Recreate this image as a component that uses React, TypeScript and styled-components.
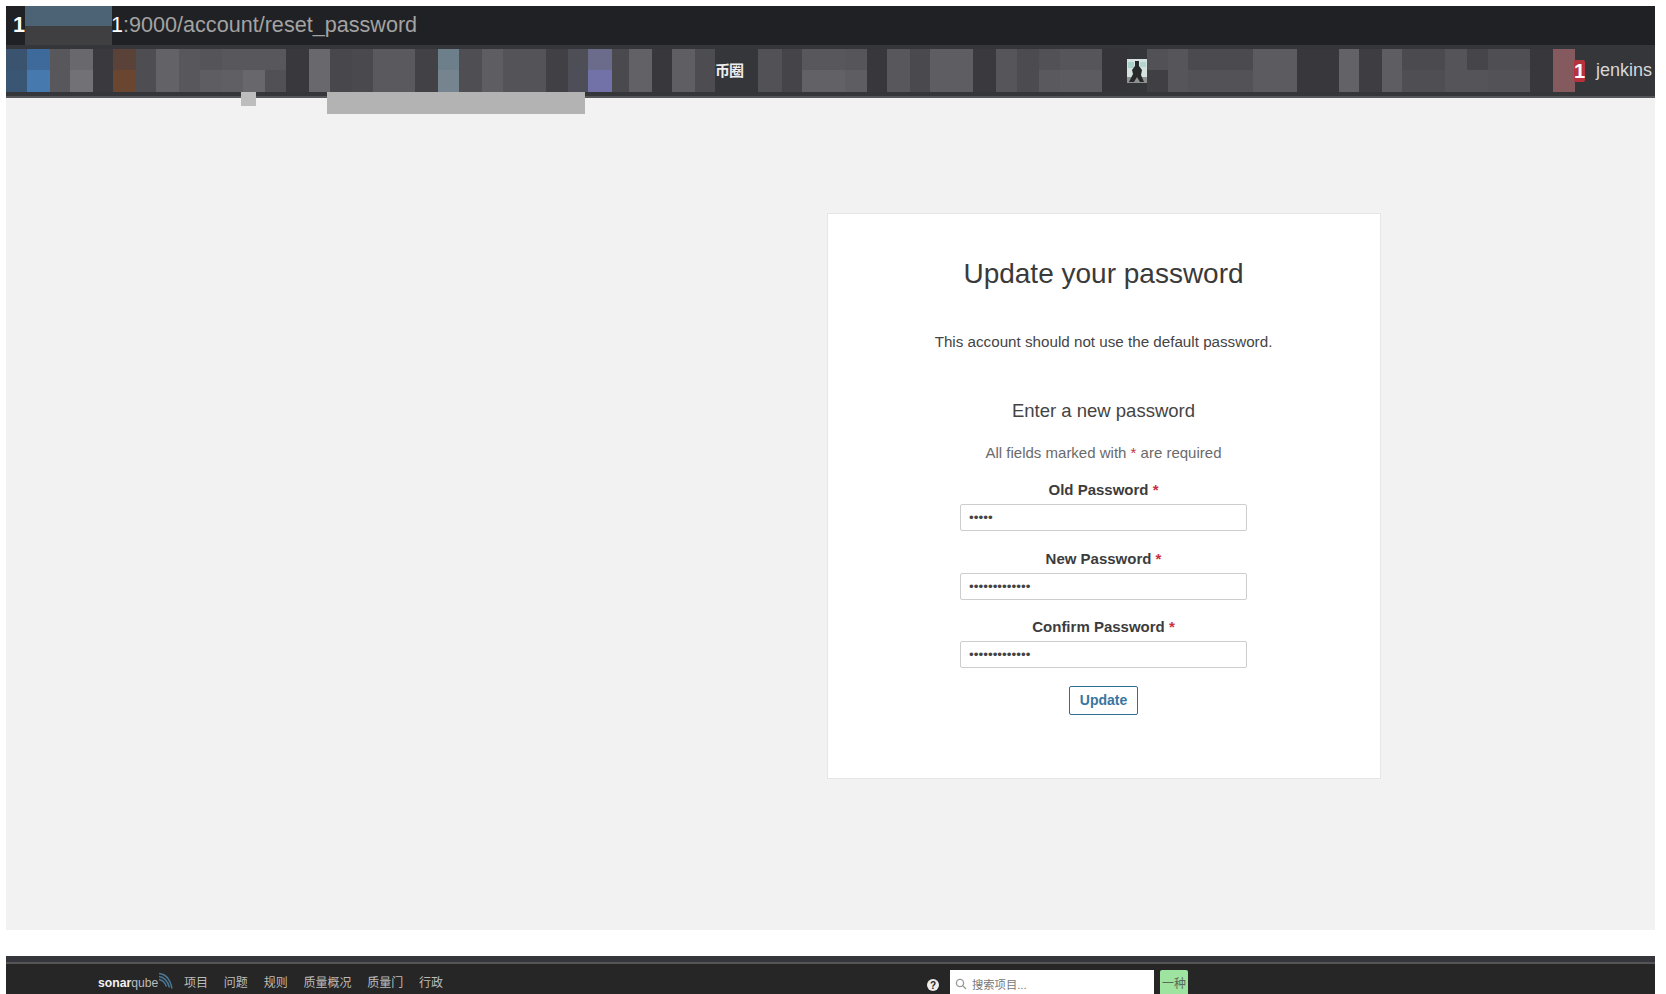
import styled, { createGlobalStyle } from "styled-components";

const GlobalStyle = createGlobalStyle`
  html, body {
    margin: 0;
    padding: 0;
    background: #fff;
    height: 994px;
    overflow: hidden;
  }
`;

const Page = styled.div`
  height: 994px;
  padding: 6px 11px 0 6px;
  box-sizing: border-box;
  display: flex;
  flex-direction: column;
  font-family: "Liberation Sans", "Noto Sans CJK SC", sans-serif;
  overflow: hidden;
`;

const UrlBar = styled.div`
  height: 39px;
  flex: none;
  background: #202124;
  display: flex;
  align-items: center;
  padding: 0 0 2px 7px;
  box-sizing: border-box;
  font-size: 21.6px;
  color: #a3a3a3;
  position: relative;
`;
const UrlStart = styled.span`
  color: #fff;
  font-weight: bold;
  width: 98px;
`;
const UrlOne = styled.span`
  color: #fff;
`;
const UrlMask = styled.div`
  position: absolute;
  left: 19px;
  top: 0;
  width: 87px;
  height: 39px;
  background: linear-gradient(#4c6275 0 20px, #3f3f41 20px);
`;

const NavBar = styled.div`
  height: 53px;
  flex: none;
  background: #35363a;
  border-bottom: 2px solid #55565a;
  box-sizing: border-box;
  padding-top: 4px;
  display: flex;
  position: relative;
`;
const Cell = styled.div<{ $w: number; $top: string; $bottom: string }>`
  width: ${(p) => p.$w}px;
  height: 43px;
  flex: none;
  background: linear-gradient(${(p) => p.$top} 0 21px, ${(p) => p.$bottom} 21px);
`;
const Coin = styled.div`
  width: 43px;
  height: 41px;
  flex: none;
  display: flex;
  align-items: center;
  font-size: 15px;
  font-weight: bold;
  color: #eee;
  letter-spacing: -1px;
`;
const Avatar = styled.div`
  width: 20px;
  height: 43px;
  flex: none;
  display: flex;
  align-items: center;
`;
const Badge = styled.div`
  width: 11px;
  height: 22px;
  margin: 11px 0 0 -1px;
  flex: none;
  background: #b8323e;
  border-radius: 2px;
  color: #fff;
  font-weight: bold;
  font-size: 20px;
  display: flex;
  align-items: center;
  justify-content: center;
`;
const UserName = styled.div`
  margin-left: 11px;
  height: 43px;
  line-height: 43px;
  font-size: 18px;
  color: #d8d8d8;
  white-space: nowrap;
`;
const DropBar = styled.div`
  position: absolute;
  left: 321px;
  top: 47px;
  width: 258px;
  height: 22px;
  background: #b3b3b3;
`;
const DropDot = styled.div`
  position: absolute;
  left: 235px;
  top: 47px;
  width: 15px;
  height: 14px;
  background: #bdbdbd;
`;

const Main = styled.main`
  height: 832px;
  flex: none;
  background: #f2f2f2;
  box-sizing: border-box;
  padding: 115px 274px 0 0;
  display: flex;
  justify-content: flex-end;
  align-items: flex-start;
`;
const Card = styled.form`
  width: 554px;
  height: 566px;
  box-sizing: border-box;
  background: #fff;
  border: 1px solid #e6e6e6;
  display: flex;
  flex-direction: column;
  align-items: center;
  padding: 43px 1px 0 0;
`;
const Title = styled.h1`
  margin: 0;
  font-size: 28px;
  line-height: 34px;
  font-weight: normal;
  color: #3a3a3a;
`;
const Note = styled.p`
  margin: 41px 0 0;
  font-size: 15.2px;
  line-height: 20px;
  color: #444;
`;
const SubTitle = styled.h2`
  margin: 48px 0 0;
  font-size: 18.5px;
  line-height: 22px;
  font-weight: normal;
  color: #444;
`;
const Hint = styled.p`
  margin: 21px 0 17px;
  font-size: 15px;
  line-height: 20px;
  color: #6a6a6a;
`;
const Star = styled.span`
  color: #c8323f;
`;
const Field = styled.div`
  display: flex;
  flex-direction: column;
  align-items: center;
  height: 68.5px;
`;
const FieldLabel = styled.label`
  font-size: 15px;
  line-height: 20px;
  font-weight: bold;
  color: #3c3c3c;
`;
const PasswordInput = styled.input`
  width: 287px;
  height: 27px;
  margin-top: 4px;
  box-sizing: border-box;
  border: 1px solid #cdcdcd;
  border-radius: 2px;
  padding: 0 8px;
  font-family: "Liberation Sans", sans-serif;
  font-size: 13.5px;
  color: #444;
  background: #fff;
  outline: none;
`;
const UpdateButton = styled.button`
  width: 69px;
  height: 29px;
  box-sizing: border-box;
  background: #fff;
  border: 1px solid #2f6f93;
  border-radius: 2px;
  color: #3a75a0;
  font-family: "Liberation Sans", sans-serif;
  font-size: 14px;
  font-weight: bold;
  padding: 0;
`;

const Gap = styled.div`
  height: 26px;
  flex: none;
  background: #fff;
`;

const SonarBar = styled.div`
  flex: 1;
  background: #262626;
  display: flex;
  flex-direction: column;
`;
const SonarTop = styled.div`
  height: 6px;
  flex: none;
  background: #35353c;
  border-bottom: 2px solid #555;
`;
const SonarRow = styled.div`
  flex: 1;
  display: flex;
  align-items: flex-start;
  padding: 6px 0 0 92px;
`;
const Logo = styled.div`
  width: 76px;
  height: 24px;
  flex: none;
  display: flex;
  align-items: flex-end;
  position: relative;
  font-size: 12.2px;
  line-height: 21px;
  color: #bbb;
`;
const LogoBold = styled.b`
  color: #f2f2f2;
`;
const LogoArcs = styled.svg`
  position: absolute;
  right: 0;
  top: 2px;
`;
const Menu = styled.nav`
  display: flex;
  gap: 15.8px;
  margin-left: 10px;
  font-size: 12px;
  line-height: 26px;
  color: #bbb;
  width: 265px;
  flex: none;
  white-space: nowrap;
`;
const Help = styled.svg`
  margin: 9px 0 0 478px;
  flex: none;
`;
const SearchBox = styled.div`
  width: 204px;
  height: 28px;
  margin-left: 11px;
  flex: none;
  background: #fff;
  display: flex;
  align-items: center;
  padding-left: 5px;
  box-sizing: border-box;
  gap: 5px;
  font-size: 11.3px;
  color: #777;
`;
const LangBadge = styled.div`
  width: 28px;
  height: 28px;
  margin-left: 6px;
  flex: none;
  background: #9fe3a0;
  border-radius: 2px;
  color: #5a6b5a;
  font-size: 12px;
  line-height: 28px;
  text-align: center;
  white-space: nowrap;
`;

const g = (n: number) => `rgb(${n},${n},${n + 4})`;

// width, top colour, bottom colour of the blurred blocks, left to right
const leftCells: [number, string, string][] = [
  [21, "#3a536f", "#3a5675"],
  [23, "#3d6a9a", "#4679ad"],
  [20, g(88), g(88)],
  [23, g(105), g(114)],
  [20, g(58), g(58)],
  [23, "#5a4238", "#6a4630"],
  [20, g(78), g(78)],
  [23, g(99), g(99)],
  [21, g(88), g(88)],
  [22, g(85), g(94)],
  [21, g(88), g(96)],
  [22, g(88), g(104)],
  [21, g(88), g(81)],
  [23, g(57), g(57)],
  [21, g(105), g(105)],
  [22, g(72), g(72)],
  [21, g(74), g(74)],
  [42, g(90), g(90)],
  [23, g(66), g(66)],
  [21, "#6e7f8c", "#75848f"],
  [23, g(79), g(79)],
  [21, g(94), g(94)],
  [43, g(84), g(84)],
  [22, g(65), g(65)],
  [20, "#4e4e56", "#4e4e58"],
  [24, "#6b6b8c", "#7272a8"],
  [17, g(74), g(74)],
  [23, g(98), g(98)],
  [20, g(56), g(56)],
  [23, g(95), g(95)],
  [20, g(77), g(77)],
];
const midCells: [number, string, string][] = [
  [24, g(82), g(82)],
  [20, g(69), g(69)],
  [43, g(88), g(98)],
  [22, g(86), g(94)],
  [20, g(56), g(56)],
  [23, g(88), g(88)],
  [20, g(74), g(74)],
  [43, g(94), g(94)],
  [23, g(58), g(58)],
  [21, g(86), g(86)],
  [22, g(76), g(76)],
  [21, g(82), g(90)],
  [42, g(86), g(92)],
  [25, g(53), g(53)],
];
const rightCells: [number, string, string][] = [
  [21, g(82), g(64)],
  [20, g(86), g(86)],
  [65, g(75), g(83)],
  [44, g(92), g(92)],
  [42, g(56), g(56)],
  [20, g(99), g(99)],
  [23, g(62), g(62)],
  [20, g(94), g(94)],
  [43, g(75), g(79)],
  [22, g(85), g(85)],
  [21, g(70), g(85)],
  [42, g(79), g(83)],
  [23, g(56), g(56)],
  [22, "#845a5e", "#845a5e"],
];

const renderCells = (cells: [number, string, string][]) =>
  cells.map(([w, top, bottom], i) => <Cell key={i} $w={w} $top={top} $bottom={bottom} />);

function App() {
  return (
    <>
      <GlobalStyle />
      <Page>
        <UrlBar>
          <UrlStart>1</UrlStart>
          <UrlOne>1</UrlOne>:9000/account/reset_password
          <UrlMask />
        </UrlBar>
        <NavBar>
          {renderCells(leftCells)}
          <Coin>币圈</Coin>
          {renderCells(midCells)}
          <Avatar>
            <svg width="20" height="24" viewBox="0 0 20 24">
              <rect width="20" height="18" fill="#d5e2df" />
              <rect y="18" width="20" height="6" fill="#8d9190" />
              <rect x="1" y="3" width="6" height="6" fill="#a9d2cb" />
              <rect x="13" y="3" width="6" height="5" fill="#b5d6d0" />
              <path d="M8 2h4v5l3 4-1 5 3 7h-4l-3-5-3 5H2l4-8-1-4 3-4z" fill="#26282a" />
            </svg>
          </Avatar>
          {renderCells(rightCells)}
          <Badge>1</Badge>
          <UserName>jenkins</UserName>
          <DropDot />
          <DropBar />
        </NavBar>
        <Main>
          <Card>
            <Title>Update your password</Title>
            <Note>This account should not use the default password.</Note>
            <SubTitle>Enter a new password</SubTitle>
            <Hint>
              All fields marked with <Star>*</Star> are required
            </Hint>
            <Field>
              <FieldLabel>
                Old Password <Star>*</Star>
              </FieldLabel>
              <PasswordInput type="password" value="admin" readOnly />
            </Field>
            <Field>
              <FieldLabel>
                New Password <Star>*</Star>
              </FieldLabel>
              <PasswordInput type="password" value="aaaaaaaaaaaaa" readOnly />
            </Field>
            <Field>
              <FieldLabel>
                Confirm Password <Star>*</Star>
              </FieldLabel>
              <PasswordInput type="password" value="aaaaaaaaaaaaa" readOnly />
            </Field>
            <UpdateButton type="button">Update</UpdateButton>
          </Card>
        </Main>
        <Gap />
        <SonarBar>
          <SonarTop />
          <SonarRow>
            <Logo>
              <span>
                <LogoBold>sonar</LogoBold>qube
              </span>
              <LogoArcs width="16" height="17" viewBox="0 0 16 17" fill="none" stroke="#4a7896" strokeWidth="1.4">
                <path d="M1 1.5c6 .5 11 5 13 15M1 4.5c5 .5 8.500 4 10.500 11M1 7.500c3 .5 6 3 7.500 7" />
              </LogoArcs>
            </Logo>
            <Menu>
              <span>项目</span>
              <span>问题</span>
              <span>规则</span>
              <span>质量概况</span>
              <span>质量门</span>
              <span>行政</span>
            </Menu>
            <Help width="12" height="12" viewBox="0 0 12 12">
              <circle cx="6" cy="6" r="6" fill="#eee" />
              <text x="6" y="9.500" textAnchor="middle" fontSize="10" fontWeight="bold" fill="#262626" fontFamily="Liberation Sans">
                ?
              </text>
            </Help>
            <SearchBox>
              <svg width="12" height="12" viewBox="0 0 12 12" fill="none" stroke="#999" strokeWidth="1.3">
                <circle cx="5" cy="5" r="3.600" />
                <path d="M7.800 7.800L11 11" />
              </svg>
              搜索项目...
            </SearchBox>
            <LangBadge>一种</LangBadge>
          </SonarRow>
        </SonarBar>
      </Page>
    </>
  );
}

export default App;
